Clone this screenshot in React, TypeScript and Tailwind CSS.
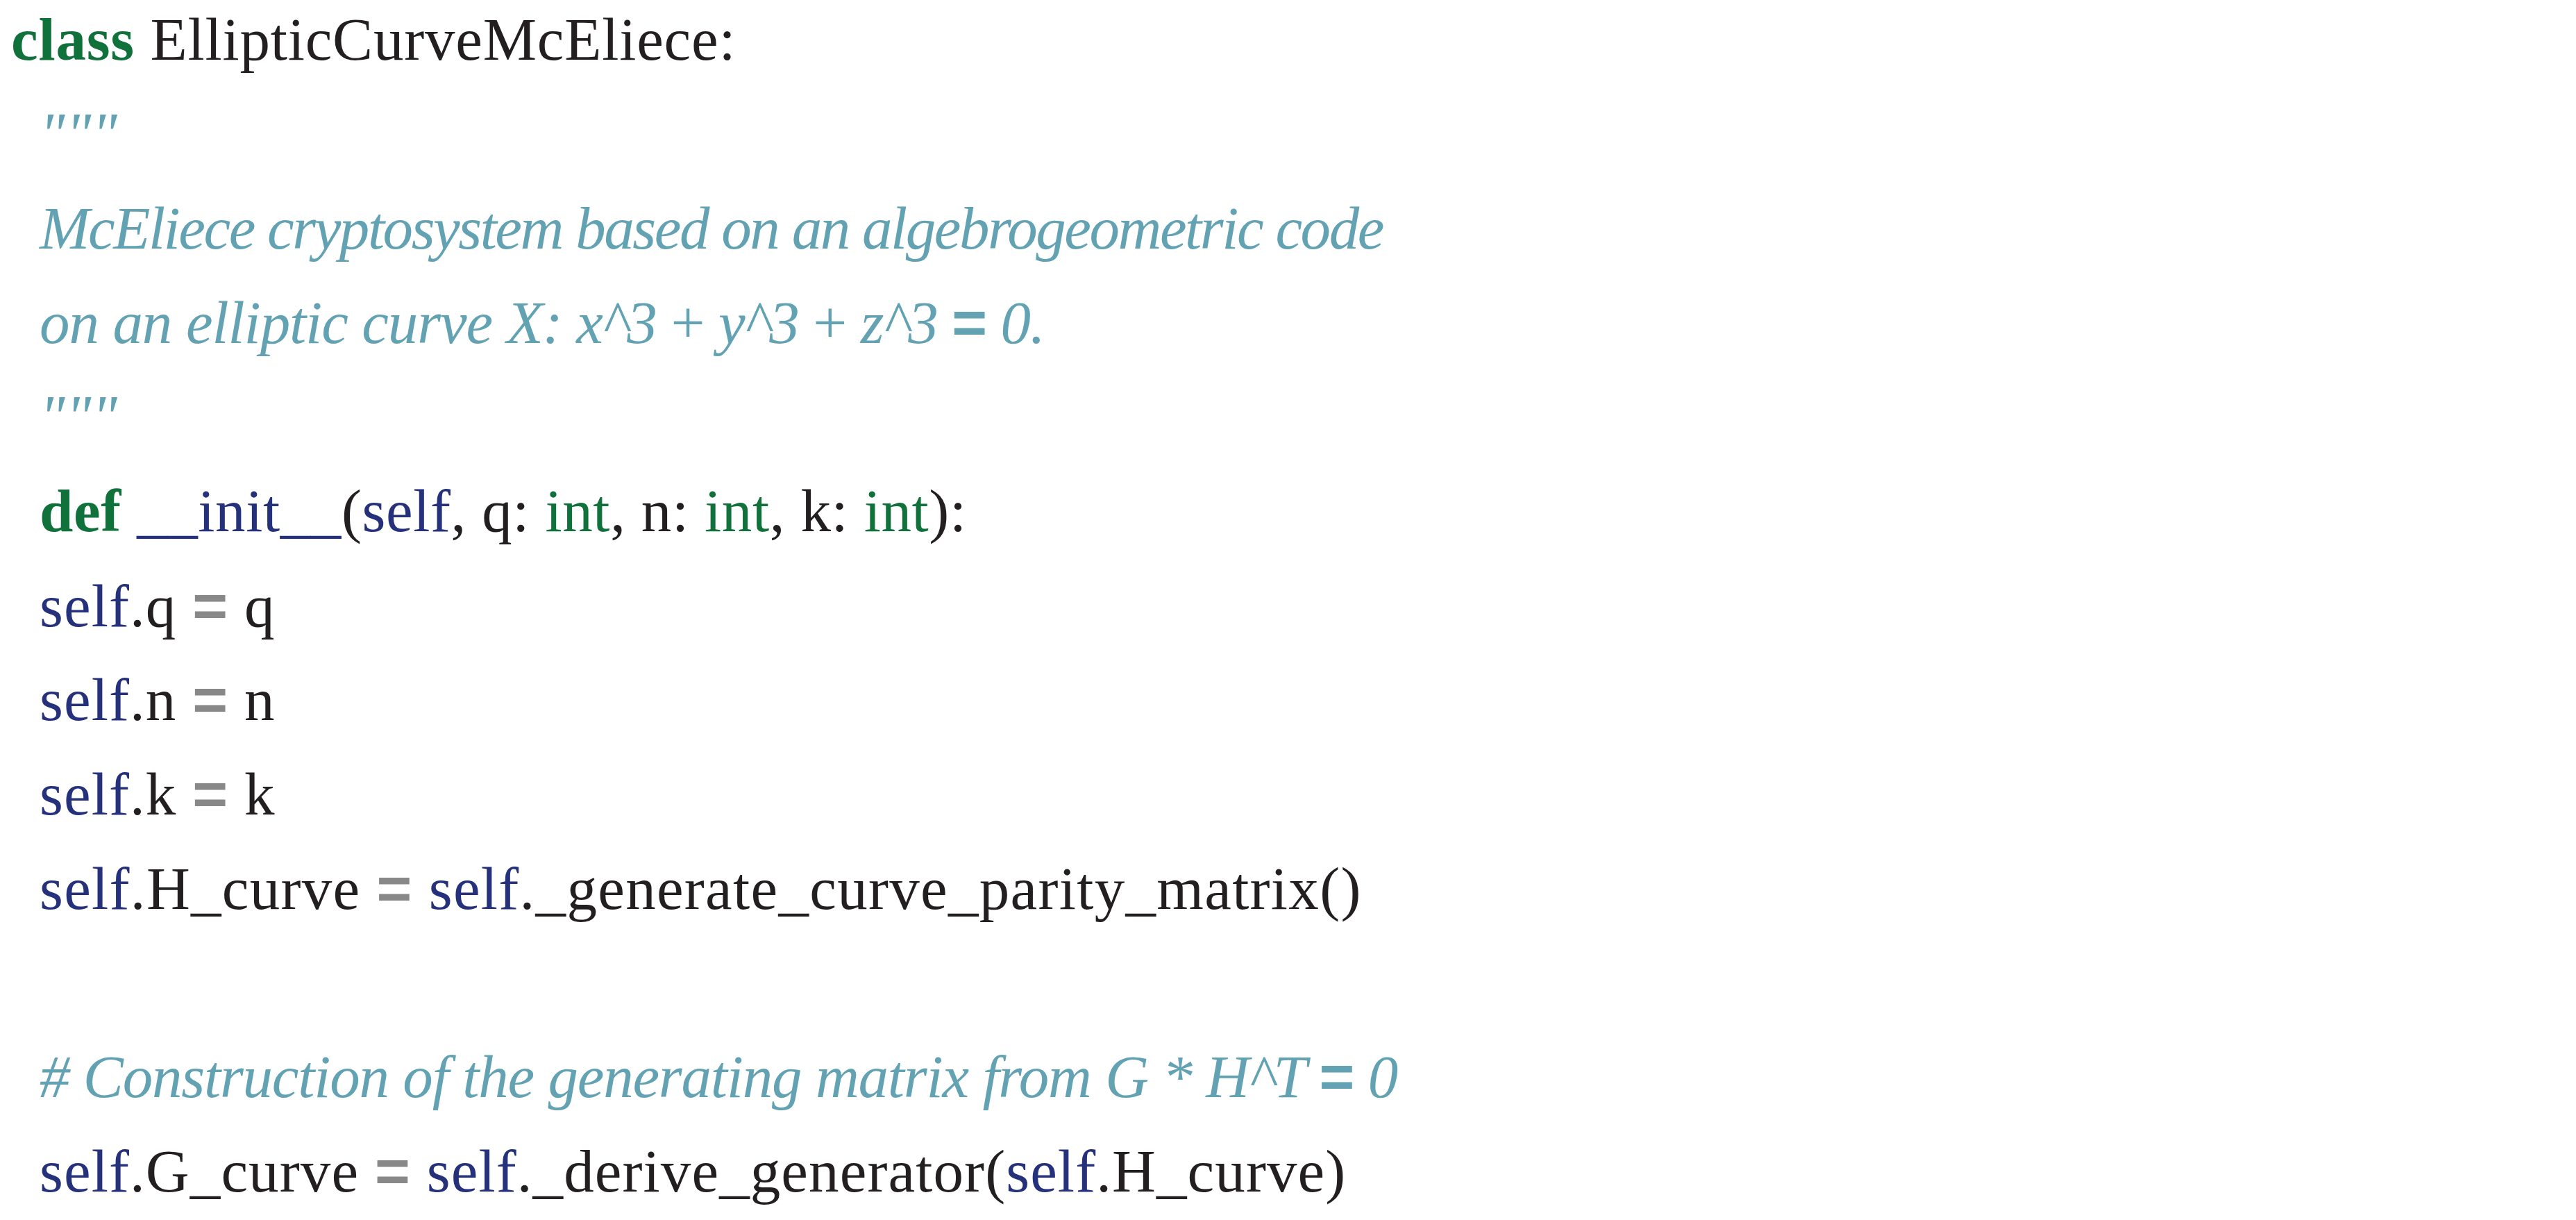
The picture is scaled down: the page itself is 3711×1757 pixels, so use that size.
const KW = "font-bold text-[#11713b]";
const SELF = "text-[#25317a]";
const TYPE = "text-[#11713b]";
const DOC = "italic text-[#62a2b2]";

function Eq({ className = "text-[#888888]" }: { className?: string }) {
  return (
    <span className={`not-italic font-bold font-['Liberation_Sans',sans-serif] ${className}`}>=</span>
  );
}

function Line({
  indent = true,
  className = "tracking-[1.1px]",
  children,
}: {
  indent?: boolean;
  className?: string;
  children?: React.ReactNode;
}) {
  return (
    <div className={`h-[135.75px] whitespace-pre ${indent ? "pl-[57px]" : "pl-[16px]"} ${className}`}>
      {children}
    </div>
  );
}

export default function App() {
  return (
    <div className="min-h-screen bg-white">
      <div className="-mt-[11px] font-['Liberation_Serif',serif] text-[87px] leading-[135.75px] text-[#231f20]">
        <Line indent={false} className="tracking-[0.8px]">
          <span className={KW}>class</span> EllipticCurveMcEliece:
        </Line>
        <Line>
          <span className={DOC}>"""</span>
        </Line>
        <Line className="tracking-[-2.45px]">
          <span className={DOC}>McEliece cryptosystem based on an algebrogeometric code</span>
        </Line>
        <Line className="tracking-[-1.1px]">
          <span className={DOC}>
            on an elliptic curve X: x^3 <span className="not-italic">+</span> y^3{" "}
            <span className="not-italic">+</span> z^3 <Eq className="text-[#62a2b2]" /> 0.
          </span>
        </Line>
        <Line>
          <span className={DOC}>"""</span>
        </Line>
        <Line className="tracking-[0.6px]">
          <span className={KW}>def</span> <span className={SELF}>__init__</span>(
          <span className={SELF}>self</span>, q: <span className={TYPE}>int</span>, n:{" "}
          <span className={TYPE}>int</span>, k: <span className={TYPE}>int</span>):
        </Line>
        <Line>
          <span className={SELF}>self</span>.q <Eq /> q
        </Line>
        <Line>
          <span className={SELF}>self</span>.n <Eq /> n
        </Line>
        <Line>
          <span className={SELF}>self</span>.k <Eq /> k
        </Line>
        <Line className="tracking-[1.3px]">
          <span className={SELF}>self</span>.H_curve <Eq /> <span className={SELF}>self</span>
          ._generate_curve_parity_matrix()
        </Line>
        <Line />
        <Line className="tracking-[-1.2px]">
          <span className={DOC}>
            # Construction of the generating matrix from G * H^T <Eq className="text-[#62a2b2]" /> 0
          </span>
        </Line>
        <Line>
          <span className={SELF}>self</span>.G_curve <Eq /> <span className={SELF}>self</span>
          ._derive_generator(<span className={SELF}>self</span>.H_curve)
        </Line>
      </div>
    </div>
  );
}
